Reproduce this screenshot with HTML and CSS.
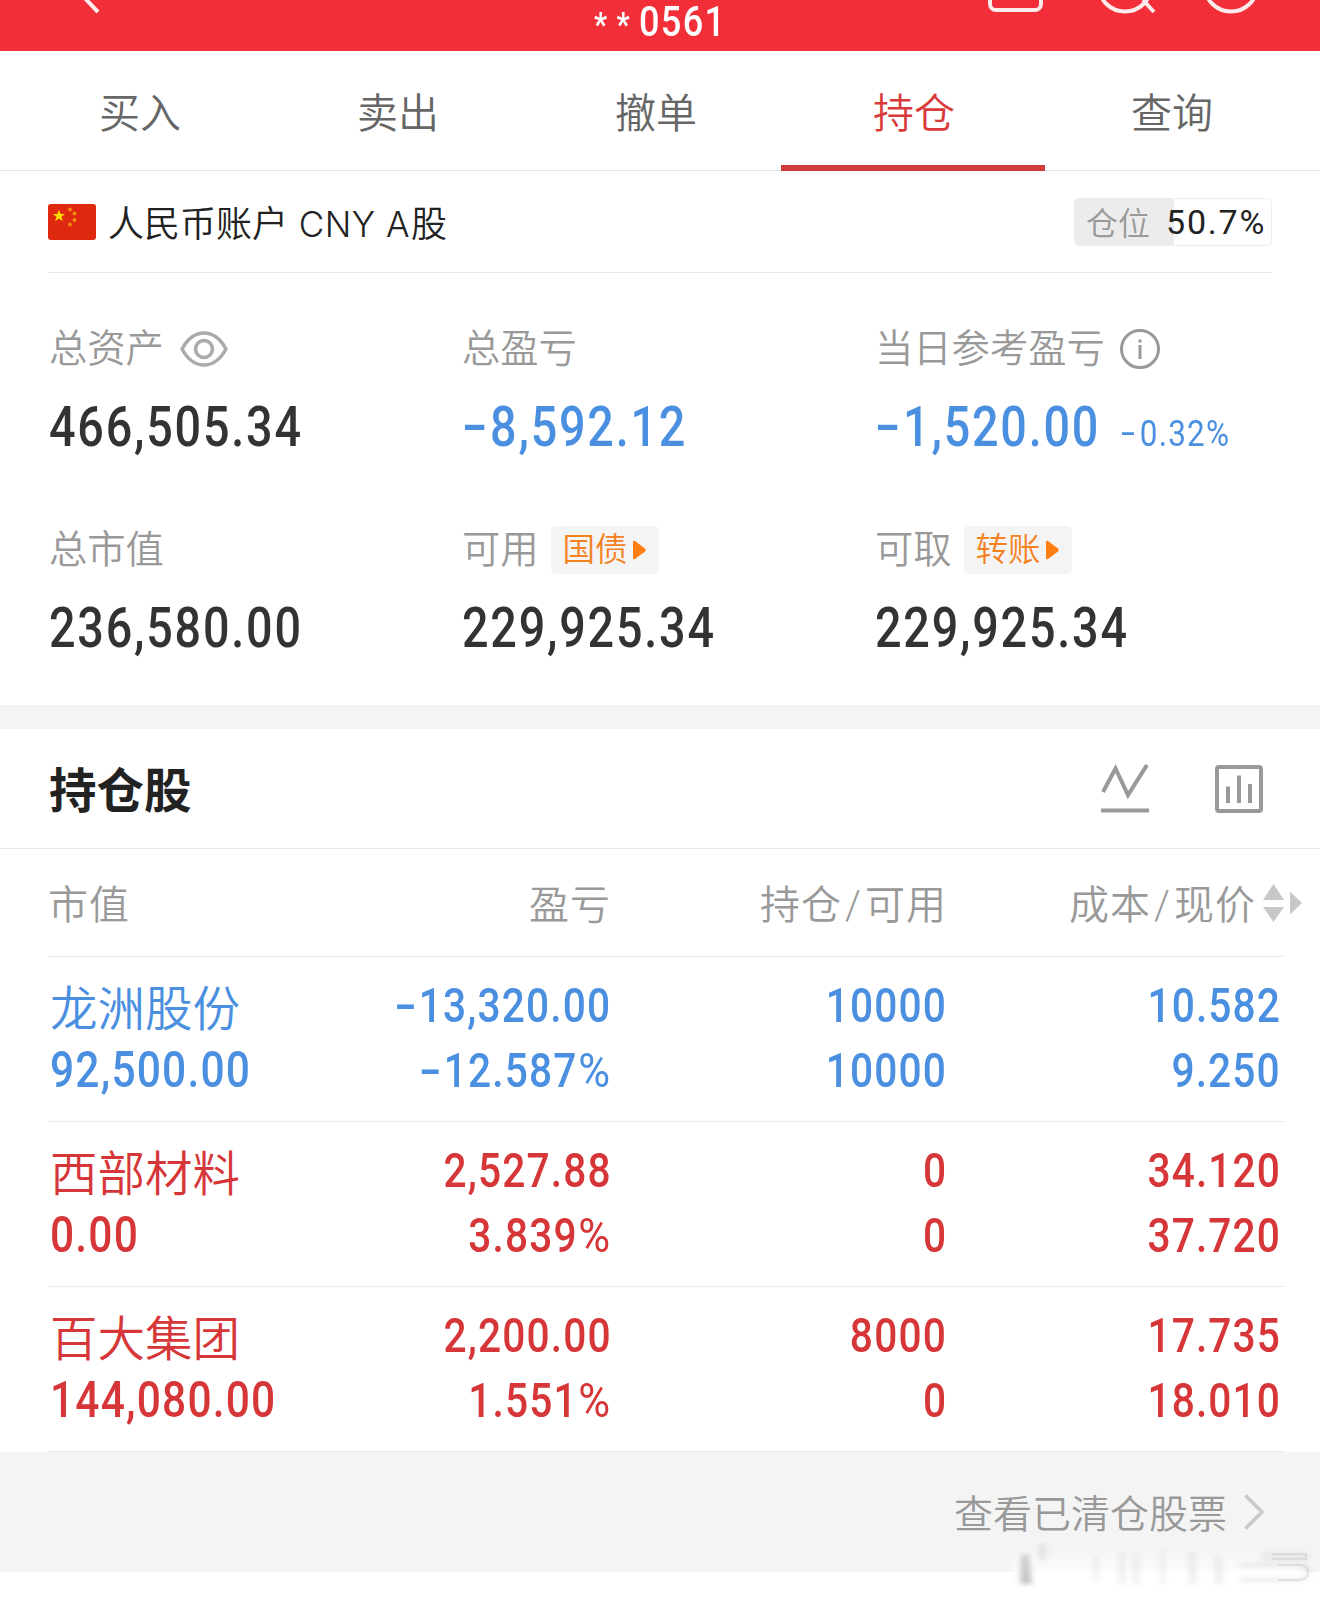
FILE: index.html
```html
<!DOCTYPE html>
<html lang="zh-CN">
<head>
  <meta charset="UTF-8">
  <title>持仓</title>
  <meta name="viewport" content="width=device-width, initial-scale=1" />
  <link rel="stylesheet" href="styles.css">
</head>
<body>
  <header class="topbar">
    <svg class="topbar-back" width="24" height="51" viewBox="0 0 24 51"><path d="M2 -7 L20 12" /></svg>
    <div class="account-no"><span class="stars">**</span>0561</div>
    <svg class="topbar-icons" width="280" height="51" viewBox="0 0 280 51">
      <rect x="10" y="-30" width="51" height="40" rx="6" />
      <circle cx="145" cy="-15" r="26.500" />
      <path d="M163 0 L174 12" />
      <circle cx="251" cy="-15" r="26.500" />
    </svg>
  </header>

  <nav class="tabs">
    <a class="tab">买入</a>
    <a class="tab">卖出</a>
    <a class="tab">撤单</a>
    <a class="tab active">持仓</a>
    <a class="tab">查询</a>
  </nav>

  <section class="account">
    <svg class="flag" width="48" height="36" viewBox="0 0 48 36">
      <rect width="48" height="36" rx="3" fill="#de2910" />
      <path fill="#ffde00" d="M11 5.5 L12.6 10 L17 10 L13.5 12.8 L14.8 17.3 L11 14.6 L7.2 17.3 L8.5 12.8 L5 10 L9.4 10 Z" />
      <g fill="#f58a12"><circle cx="22" cy="5.500" r="1.900" /><circle cx="26.500" cy="9.500" r="1.900" /><circle cx="26.500" cy="16" r="1.900" /><circle cx="22" cy="20.500" r="1.900" /></g>
    </svg>
    <span class="account-name">人民币账户 <span class="latin">CNY A</span>股</span>
    <div class="position"><span class="position-label">仓位</span><span class="position-value">50.7%</span></div>
  </section>

  <section class="assets">
    <div class="asset">
      <div class="label">总资产
        <svg class="eye" width="48" height="36" viewBox="0 0 48 36"><path d="M2 18 C8 7 15 2 24 2 S40 7 46 18 C40 29 33 34 24 34 S8 29 2 18 Z" /><circle cx="24" cy="18" r="8.500" /></svg>
      </div>
      <div class="amount"><span class="num">466,505.34</span></div>
    </div>
    <div class="asset">
      <div class="label">总盈亏</div>
      <div class="amount down"><span class="num"><i class="minus">-</i>8,592.12</span></div>
    </div>
    <div class="asset">
      <div class="label">当日参考盈亏
        <svg class="info" width="40" height="40" viewBox="0 0 40 40"><circle cx="20" cy="20" r="18.500" /><path d="M20 16 V30 M20 10.500 V13.500" /></svg>
      </div>
      <div class="amount down"><span class="num"><i class="minus">-</i>1,520.00</span><span class="num rate"><i class="minus">-</i>0.32%</span></div>
    </div>
    <div class="asset">
      <div class="label">总市值</div>
      <div class="amount"><span class="num">236,580.00</span></div>
    </div>
    <div class="asset">
      <div class="label">可用 <a class="tag">国债<svg width="13" height="20" viewBox="0 0 13 20"><path d="M0 2 Q0 0 2 1 L12 8.500 Q13.500 10 12 11.500 L2 19 Q0 20 0 18 Z" /></svg></a></div>
      <div class="amount"><span class="num">229,925.34</span></div>
    </div>
    <div class="asset">
      <div class="label">可取 <a class="tag">转账<svg width="13" height="20" viewBox="0 0 13 20"><path d="M0 2 Q0 0 2 1 L12 8.500 Q13.500 10 12 11.500 L2 19 Q0 20 0 18 Z" /></svg></a></div>
      <div class="amount"><span class="num">229,925.34</span></div>
    </div>
  </section>

  <section class="holdings">
    <div class="holdings-head">
      <h2>持仓股</h2>
      <svg class="trend" width="48" height="49" viewBox="0 0 48 49"><path d="M2 28 L14.500 4.500 L27 31 L46 1" /><path d="M0 46.500 H48" /></svg>
      <svg class="bars" width="48" height="48" viewBox="0 0 48 48"><rect x="2" y="2" width="44" height="44" rx="2" /><path d="M13 21.500 V38 M24 10.500 V38 M35 19 V38" /></svg>
    </div>

    <div class="row row-head">
      <span>市值</span>
      <span>盈亏</span>
      <span>持仓<b>/</b>可用</span>
      <span>成本<b>/</b>现价</span>
      <svg class="sort" width="40" height="40" viewBox="0 0 40 40"><path d="M0 17 L10.500 1 L21 17 Z M0 24 L10.500 39 L21 24 Z M27 8.500 L39 20 L27 31.500 Z" /></svg>
    </div>

    <div class="row down">
      <div class="cell"><span class="name">龙洲股份</span><span class="num">92,500.00</span></div>
      <div class="cell"><span class="num"><i class="minus">-</i>13,320.00</span><span class="num"><i class="minus">-</i>12.587<i class="pct">%</i></span></div>
      <div class="cell"><span class="num">10000</span><span class="num">10000</span></div>
      <div class="cell"><span class="num">10.582</span><span class="num">9.250</span></div>
    </div>
    <div class="row up">
      <div class="cell"><span class="name">西部材料</span><span class="num">0.00</span></div>
      <div class="cell"><span class="num">2,527.88</span><span class="num">3.839<i class="pct">%</i></span></div>
      <div class="cell"><span class="num">0</span><span class="num">0</span></div>
      <div class="cell"><span class="num">34.120</span><span class="num">37.720</span></div>
    </div>
    <div class="row up">
      <div class="cell"><span class="name">百大集团</span><span class="num">144,080.00</span></div>
      <div class="cell"><span class="num">2,200.00</span><span class="num">1.551<i class="pct">%</i></span></div>
      <div class="cell"><span class="num">8000</span><span class="num">0</span></div>
      <div class="cell"><span class="num">17.735</span><span class="num">18.010</span></div>
    </div>
  </section>

  <footer class="cleared">
    <a>查看已清仓股票</a>
    <svg class="chevron" width="20" height="36" viewBox="0 0 20 36"><path d="M1.500 1.500 L18 18 L1.500 34.500" /></svg>
    <svg class="smudge" width="320" height="46" viewBox="0 0 320 46">
      <defs>
        <filter id="soft" x="-20%" y="-20%" width="140%" height="140%"><feGaussianBlur stdDeviation="3 2" /></filter>
        <linearGradient id="fade" x1="0" x2="0" y1="0" y2="1"><stop offset="0" stop-color="#fff" stop-opacity="0" /><stop offset="1" stop-color="#fff" /></linearGradient>
      </defs>
      <rect x="12" y="4" width="290" height="38" fill="url(#fade)" filter="url(#soft)" />
      <g filter="url(#soft)" fill="#c4c4c4">
        <path d="M22 12 H28 L32 42 H20 Z" />
        <rect x="40" y="2" width="5" height="16" opacity=".6" />
        <rect x="94" y="14" width="4" height="26" opacity=".3" />
        <rect x="120" y="10" width="4" height="32" opacity=".4" />
        <rect x="134" y="12" width="4" height="30" opacity=".4" />
        <rect x="160" y="8" width="4" height="34" opacity=".3" />
        <rect x="190" y="10" width="5" height="32" opacity=".4" />
        <rect x="216" y="14" width="5" height="28" opacity=".4" />
      </g>
      <path d="M262 12 H306 V17 H262 M240 23 H300 Q308 23 308 30 T300 38 H240" fill="none" stroke="#bbb" stroke-width="1.500" opacity=".7" filter="url(#soft)" />
      <path d="M272 12 H306 V17 H272 M278 23 H300 Q308 23 308 30 T300 38 H278" fill="none" stroke="#ccc" stroke-width="1.500" opacity=".6" />
    </svg>
  </footer>
</body>
</html>
```

FILE: styles.css
```css
* { box-sizing: border-box; }
body { margin: 0; width: 1320px; min-height: 1597px; background: #fff; color: #333; font-family: Roboto, "Noto Sans CJK SC", sans-serif; }
svg { display: block; flex: none; fill: none; }
i { font-style: normal; }

.topbar { display: flex; height: 51px; padding: 0 60px 0 78px; background: #f22f38; color: #fff; }
.topbar svg { stroke: #fff; stroke-width: 4; opacity: .9; }
.account-no { width: 180px; margin-left: 492px; font-size: 42px; line-height: 44px; letter-spacing: 1.5px; white-space: nowrap; font-weight: 500; transform: scaleX(.86); transform-origin: 0 0; }
.stars { font-size: 33px; letter-spacing: 11px; font-weight: 800; }
.topbar-icons { margin-left: auto; }

.tabs { display: flex; height: 120px; padding: 0 19px 0 11px; border-bottom: 1px solid #e6e6e6; }
.tab { flex: 1; position: relative; text-align: center; font-size: 41px; line-height: 127px; color: #666; font-weight: 350; }
.tab.active { color: #d93a3a; }
.tab.active::after { content: ""; position: absolute; left: -4px; right: -2px; bottom: -1px; height: 6px; background: #cf3a3a; }

.account { display: flex; align-items: center; height: 102px; margin: 0 48px; border-bottom: 1px solid #e8e8e8; }
.account-name { margin: -2px 0 0 12px; font-size: 36px; color: #222; white-space: nowrap; font-weight: 350; }
.latin { font-family: Inter, sans-serif; font-size: 35px; letter-spacing: .5px; margin: 0 1px 0 2px; }
.position { display: flex; align-items: center; width: 198px; height: 48px; margin-left: auto; padding-left: 11px; border: 1px solid #ececec; border-radius: 5px; background: linear-gradient(90deg, #ececec 50.7%, #fff 50.7%); white-space: nowrap; }
.position-label { margin-top: -1px; font-size: 32px; color: #999; font-weight: 350; }
.position-value { margin-left: 16px; font-size: 34px; letter-spacing: 1.8px; color: #222; }

.assets { display: grid; grid-template-columns: repeat(3, 413px); grid-auto-rows: 201px; height: 432px; padding: 48px 0 0 49px; }
.label { display: flex; align-items: center; height: 56px; line-height: 54px; font-size: 38.3px; color: #999; font-weight: 350; white-space: nowrap; }
.label::first-line { line-height: 55px; }
.eye { margin-left: 16px; stroke: #aaa; stroke-width: 3.5; }
.info { margin-left: 15px; stroke: #999; stroke-width: 3; }
.tag { display: flex; align-items: center; gap: 4px; width: 108px; height: 48px; margin-left: 12px; padding-left: 12px; border-radius: 5px; background: #f4f4f4; color: #f5811f; font-size: 32.5px; }
.tag svg { margin-left: 1px; fill: #ff7d12; }
.amount { display: flex; align-items: baseline; margin-top: 18px; height: 64px; line-height: 64px; font-size: 55px; }

/* narrow tabular figures */
.num { display: inline-block; font-weight: 500; letter-spacing: .038em; transform: scaleX(.85); transform-origin: 0 50%; white-space: nowrap; }
.minus { display: inline-block; width: .6em; transform: translateY(-.03em) scaleX(1.6); transform-origin: 0 50%; }
.rate { margin-left: -19px; font-size: 37px; font-weight: 400; }
.pct { display: inline-block; font-weight: 400; transform: scaleX(1.07); transform-origin: 100% 50%; margin-left: .07em; }
.down { color: #4a8fe0; }
.up { color: #d63638; }

.holdings { border-top: 24px solid #f4f4f4; }
.holdings-head { display: flex; align-items: center; height: 120px; padding: 0 57px 0 49px; border-bottom: 1px solid #e8e8e8; }
.holdings-head h2 { margin: 8px auto 0 0; font-size: 47.5px; font-weight: 600; line-height: 1; color: #222; }
.holdings-head svg { stroke: #999; stroke-width: 4; }
.trend { margin-right: 66px; }

.row { display: grid; grid-template-columns: 290px 272px 336px 334px; height: 165px; margin: 0 36px 0 48px; border-bottom: 1px solid #ebebeb; }
.row-head { position: relative; height: 108px; line-height: 113px; font-size: 40px; color: #999; font-weight: 350; }
.row-head span { text-align: right; letter-spacing: 1px; margin-right: -1px; }
.row-head span:first-child { text-align: left; }
.row-head span:nth-child(4) { padding-right: 25px; }
.row-head b { margin: 0 3px; font-weight: 350; }
.sort { position: absolute; right: -19px; top: 34px; fill: #c8c8c8; }
.cell { display: flex; flex-direction: column; align-items: flex-end; padding-top: 16px; line-height: 65px; font-size: 49px; }
.cell:first-child { align-items: flex-start; padding-left: 2px; }
.cell .num { height: 65px; letter-spacing: .028em; margin-right: -.028em; transform: scaleX(.83); transform-origin: 100% 50%; }
.cell:first-child .num { font-size: 50px; transform: scaleX(.85); transform-origin: 0 50%; }
.name { height: 65px; line-height: 75px; font-size: 47.5px; font-weight: 350; }

.cleared { position: relative; display: flex; align-items: center; height: 120px; padding-right: 56px; justify-content: flex-end; background: #f4f4f4; color: #999; font-size: 39px; font-weight: 350; }
.cleared a { margin-top: -3px; }
.chevron { margin-left: 17px; stroke: #c8c8c8; stroke-width: 3.5; }
.smudge { position: absolute; right: 0; top: 90px; }
```
